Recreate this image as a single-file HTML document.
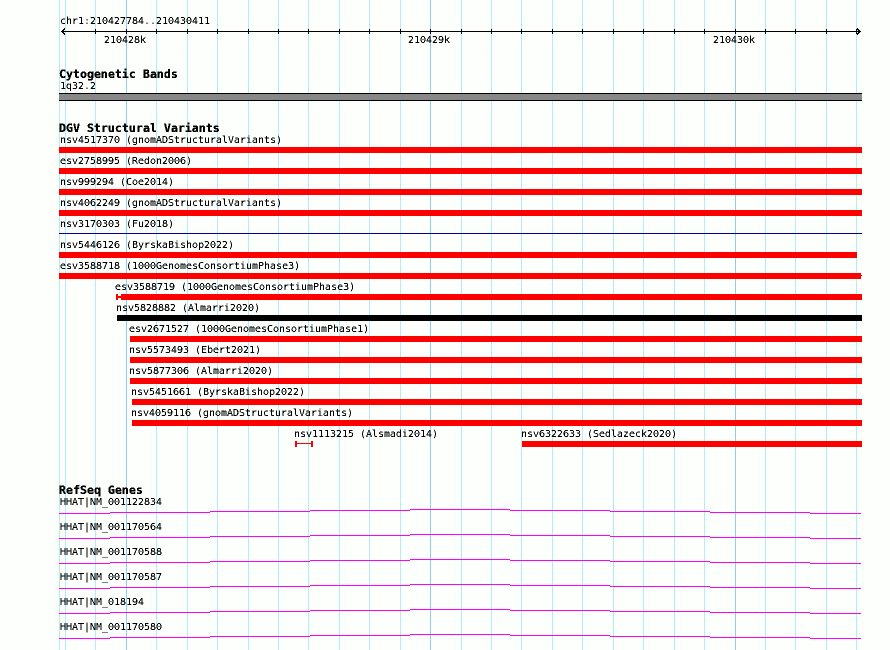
<!DOCTYPE html>
<html>
<head>
<meta charset="utf-8">
<style>
html,body{margin:0;padding:0;background:#fdfffd;width:890px;height:650px;overflow:hidden}
svg{display:block}
text{font-family:"DejaVu Sans Mono",monospace;font-size:9.97px;fill:#000;white-space:pre}
text.b{font-weight:bold;font-size:11.62px}
</style>
</head>
<body>
<svg width="890" height="650" viewBox="0 0 890 650" xmlns="http://www.w3.org/2000/svg">
<defs>
<filter id="al" x="0" y="0" width="890" height="650" filterUnits="userSpaceOnUse" color-interpolation-filters="sRGB">
<feComponentTransfer><feFuncA type="discrete" tableValues="0 0 1 1 1"/></feComponentTransfer>
</filter>
<filter id="alb" x="0" y="0" width="890" height="650" filterUnits="userSpaceOnUse" color-interpolation-filters="sRGB">
<feComponentTransfer><feFuncA type="discrete" tableValues="0 1 1 1"/></feComponentTransfer>
</filter>
</defs>
<rect width="890" height="650" fill="#fdfffd"/>
<g shape-rendering="crispEdges">
<!-- grid -->
<g fill="#b0eeee">
<rect x="59" y="0" width="1" height="650"/><rect x="65" y="0" width="1" height="650"/><rect x="95" y="0" width="1" height="650"/>
<rect x="156" y="0" width="1" height="650"/><rect x="187" y="0" width="1" height="650"/><rect x="217" y="0" width="1" height="650"/>
<rect x="248" y="0" width="1" height="650"/><rect x="278" y="0" width="1" height="650"/><rect x="308" y="0" width="1" height="650"/>
<rect x="339" y="0" width="1" height="650"/><rect x="369" y="0" width="1" height="650"/><rect x="400" y="0" width="1" height="650"/>
<rect x="461" y="0" width="1" height="650"/><rect x="491" y="0" width="1" height="650"/><rect x="521" y="0" width="1" height="650"/>
<rect x="552" y="0" width="1" height="650"/><rect x="582" y="0" width="1" height="650"/><rect x="613" y="0" width="1" height="650"/>
<rect x="643" y="0" width="1" height="650"/><rect x="674" y="0" width="1" height="650"/><rect x="704" y="0" width="1" height="650"/>
<rect x="765" y="0" width="1" height="650"/><rect x="795" y="0" width="1" height="650"/><rect x="826" y="0" width="1" height="650"/>
<rect x="856" y="0" width="1" height="650"/>
</g>
<g fill="#8cd0ea">
<rect x="126" y="0" width="1" height="650"/><rect x="430" y="0" width="1" height="650"/><rect x="735" y="0" width="1" height="650"/>
</g>
<!-- axis -->
<g fill="#000">
<rect x="61" y="31" width="800" height="1"/>
<rect x="95" y="29" width="1" height="5"/><rect x="126" y="29" width="1" height="5"/><rect x="156" y="29" width="1" height="5"/>
<rect x="187" y="29" width="1" height="5"/><rect x="217" y="29" width="1" height="5"/><rect x="248" y="29" width="1" height="5"/>
<rect x="278" y="29" width="1" height="5"/><rect x="308" y="29" width="1" height="5"/><rect x="339" y="29" width="1" height="5"/>
<rect x="369" y="29" width="1" height="5"/><rect x="400" y="29" width="1" height="5"/><rect x="430" y="29" width="1" height="5"/>
<rect x="461" y="29" width="1" height="5"/><rect x="491" y="29" width="1" height="5"/><rect x="521" y="29" width="1" height="5"/>
<rect x="552" y="29" width="1" height="5"/><rect x="582" y="29" width="1" height="5"/><rect x="613" y="29" width="1" height="5"/>
<rect x="643" y="29" width="1" height="5"/><rect x="674" y="29" width="1" height="5"/><rect x="704" y="29" width="1" height="5"/>
<rect x="735" y="29" width="1" height="5"/><rect x="765" y="29" width="1" height="5"/><rect x="795" y="29" width="1" height="5"/>
<rect x="826" y="29" width="1" height="5"/><rect x="856" y="29" width="1" height="5"/>
<!-- left arrow -->
<rect x="61" y="31" width="1" height="1"/><rect x="62" y="30" width="1" height="3"/><rect x="63" y="29" width="1" height="2"/><rect x="63" y="32" width="1" height="2"/><rect x="64" y="28" width="1" height="2"/><rect x="64" y="33" width="1" height="2"/>
<!-- right arrow -->
<rect x="860" y="31" width="1" height="1"/><rect x="859" y="30" width="1" height="3"/><rect x="858" y="29" width="1" height="2"/><rect x="858" y="32" width="1" height="2"/><rect x="857" y="28" width="1" height="2"/><rect x="857" y="33" width="1" height="2"/>
</g>
<!-- cytoband -->
<rect x="59" y="93" width="803" height="8" fill="#000"/>
<rect x="59" y="94" width="803" height="6" fill="#888888"/>
<!-- variants -->
<g fill="#ff0000">
<rect x="59" y="147" width="803" height="6"/>
<rect x="59" y="168" width="803" height="6"/>
<rect x="59" y="189" width="803" height="6"/>
<rect x="59" y="210" width="803" height="6"/>
<rect x="59" y="252" width="798" height="6"/>
<rect x="59" y="273" width="802" height="6"/>
<rect x="861" y="275" width="1" height="1"/>
<rect x="116" y="294" width="2" height="6"/><rect x="116" y="296" width="5" height="2"/>
<rect x="121" y="294" width="741" height="6"/>
<rect x="130" y="336" width="732" height="6"/>
<rect x="130" y="357" width="732" height="6"/>
<rect x="130" y="378" width="732" height="6"/>
<rect x="132" y="399" width="730" height="6"/>
<rect x="132" y="420" width="730" height="6"/>
<rect x="295" y="441" width="2" height="6"/><rect x="295" y="443" width="18" height="1"/><rect x="311" y="441" width="2" height="6"/>
<rect x="522" y="441" width="340" height="6"/>
</g>
<rect x="59" y="233" width="803" height="1" fill="#00008b"/>
<rect x="117" y="315" width="745" height="6" fill="#000"/>
<!-- genes -->
<g fill="#ff00ff">
<rect x="59" y="513" width="51" height="1"/><rect x="110" y="512" width="100" height="1"/><rect x="210" y="511" width="100" height="1"/><rect x="310" y="510" width="100" height="1"/><rect x="410" y="509" width="100" height="1"/><rect x="510" y="510" width="100" height="1"/><rect x="610" y="511" width="100" height="1"/><rect x="710" y="512" width="100" height="1"/><rect x="810" y="513" width="51" height="1"/>
<rect x="59" y="538" width="51" height="1"/><rect x="110" y="537" width="100" height="1"/><rect x="210" y="536" width="100" height="1"/><rect x="310" y="535" width="100" height="1"/><rect x="410" y="534" width="100" height="1"/><rect x="510" y="535" width="100" height="1"/><rect x="610" y="536" width="100" height="1"/><rect x="710" y="537" width="100" height="1"/><rect x="810" y="538" width="51" height="1"/>
<rect x="59" y="563" width="51" height="1"/><rect x="110" y="562" width="100" height="1"/><rect x="210" y="561" width="100" height="1"/><rect x="310" y="560" width="100" height="1"/><rect x="410" y="559" width="100" height="1"/><rect x="510" y="560" width="100" height="1"/><rect x="610" y="561" width="100" height="1"/><rect x="710" y="562" width="100" height="1"/><rect x="810" y="563" width="51" height="1"/>
<rect x="59" y="588" width="51" height="1"/><rect x="110" y="587" width="100" height="1"/><rect x="210" y="586" width="100" height="1"/><rect x="310" y="585" width="100" height="1"/><rect x="410" y="584" width="100" height="1"/><rect x="510" y="585" width="100" height="1"/><rect x="610" y="586" width="100" height="1"/><rect x="710" y="587" width="100" height="1"/><rect x="810" y="588" width="51" height="1"/>
<rect x="59" y="613" width="51" height="1"/><rect x="110" y="612" width="100" height="1"/><rect x="210" y="611" width="100" height="1"/><rect x="310" y="610" width="100" height="1"/><rect x="410" y="609" width="100" height="1"/><rect x="510" y="610" width="100" height="1"/><rect x="610" y="611" width="100" height="1"/><rect x="710" y="612" width="100" height="1"/><rect x="810" y="613" width="51" height="1"/>
<rect x="59" y="638" width="51" height="1"/><rect x="110" y="637" width="100" height="1"/><rect x="210" y="636" width="100" height="1"/><rect x="310" y="635" width="100" height="1"/><rect x="410" y="634" width="100" height="1"/><rect x="510" y="635" width="100" height="1"/><rect x="610" y="636" width="100" height="1"/><rect x="710" y="637" width="100" height="1"/><rect x="810" y="638" width="51" height="1"/>
</g>
</g>
<!-- bold titles -->
<g filter="url(#alb)">
<text class="b" x="59" y="78">Cytogenetic Bands</text>
<text class="b" x="59" y="132">DGV Structural Variants</text>
<text class="b" x="59" y="494">RefSeq Genes</text>
</g>
<!-- regular text -->
<g filter="url(#al)">
<text x="60" y="24">chr1:210427784..210430411</text>
<text x="104" y="43">210428k</text>
<text x="408" y="43">210429k</text>
<text x="713" y="43">210430k</text>
<text x="60" y="89">1q32.2</text>
<text x="60" y="143">nsv4517370 (gnomADStructuralVariants)</text>
<text x="60" y="164">esv2758995 (Redon2006)</text>
<text x="60" y="185">nsv999294 (Coe2014)</text>
<text x="60" y="206">nsv4062249 (gnomADStructuralVariants)</text>
<text x="60" y="227">nsv3170303 (Fu2018)</text>
<text x="60" y="248">nsv5446126 (ByrskaBishop2022)</text>
<text x="60" y="269">esv3588718 (1000GenomesConsortiumPhase3)</text>
<text x="115" y="290">esv3588719 (1000GenomesConsortiumPhase3)</text>
<text x="116" y="311">nsv5828882 (Almarri2020)</text>
<text x="129" y="332">esv2671527 (1000GenomesConsortiumPhase1)</text>
<text x="129" y="353">nsv5573493 (Ebert2021)</text>
<text x="129" y="374">nsv5877306 (Almarri2020)</text>
<text x="131" y="395">nsv5451661 (ByrskaBishop2022)</text>
<text x="131" y="416">nsv4059116 (gnomADStructuralVariants)</text>
<text x="294" y="437">nsv1113215 (Alsmadi2014)</text>
<text x="521" y="437">nsv6322633 (Sedlazeck2020)</text>
<text x="60" y="505">HHAT|NM_001122834</text>
<text x="60" y="530">HHAT|NM_001170564</text>
<text x="60" y="555">HHAT|NM_001170588</text>
<text x="60" y="580">HHAT|NM_001170587</text>
<text x="60" y="605">HHAT|NM_018194</text>
<text x="60" y="630">HHAT|NM_001170580</text>
</g>
</svg>
</body>
</html>
